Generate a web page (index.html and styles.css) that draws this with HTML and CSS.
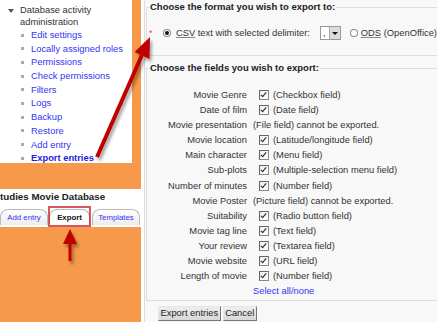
FILE: index.html
```html
<!DOCTYPE html>
<html lang="en">
<head>
  <meta charset="UTF-8">
  <title>Export entries</title>
  <link rel="stylesheet" href="styles.css">
</head>
<body>
  <div class="page">
    <aside class="side">
      <div class="admin-block">
        <div class="admin-head"><span class="tri"></span><span>Database activity<br>administration</span></div>
        <ul class="admin-list">
          <li><a href="#">Edit settings</a></li>
          <li><a href="#">Locally assigned roles</a></li>
          <li><a href="#">Permissions</a></li>
          <li><a href="#">Check permissions</a></li>
          <li><a href="#">Filters</a></li>
          <li><a href="#">Logs</a></li>
          <li><a href="#">Backup</a></li>
          <li><a href="#">Restore</a></li>
          <li><a href="#">Add entry</a></li>
          <li class="current"><a href="#">Export entries</a></li>
        </ul>
      </div>
      <div class="side-gap"></div>
      <div class="db-block">
        <div class="db-title">tudies Movie Database</div>
        <div class="tabs">
          <a href="#" class="tab tab-add">Add entry</a>
          <a href="#" class="tab tab-active">Export</a>
          <a href="#" class="tab tab-tpl">Templates</a>
        </div>
      </div>
    </aside>
    <div class="divider"></div>
    <main class="main">
      <form>
        <fieldset class="fs fs-format">
          <legend>Choose the format you wish to export to:</legend>
          <div class="format-row">
            <span class="req">*</span>
            <span class="radio checked"></span>
            <span class="opt"><u>CSV</u> text with selected delimiter:</span>
            <span class="sel"><span class="sel-val">,</span><span class="sel-btn"></span></span>
            <span class="radio radio-ods"></span>
            <span class="opt opt-ods"><u>ODS</u> (OpenOffice)</span>
          </div>
        </fieldset>
        <fieldset class="fs fs-fields">
          <legend>Choose the fields you wish to export:</legend>
          <div class="field-grid">
            <div class="flabel">Movie Genre</div><div class="fel"><span class="cb"></span>(Checkbox field)</div>
            <div class="flabel">Date of film</div><div class="fel"><span class="cb"></span>(Date field)</div>
            <div class="flabel">Movie presentation</div><div class="fel">(File field) cannot be exported.</div>
            <div class="flabel">Movie location</div><div class="fel"><span class="cb"></span>(Latitude/longitude field)</div>
            <div class="flabel">Main character</div><div class="fel"><span class="cb"></span>(Menu field)</div>
            <div class="flabel">Sub-plots</div><div class="fel"><span class="cb"></span>(Multiple-selection menu field)</div>
            <div class="flabel">Number of minutes</div><div class="fel"><span class="cb"></span>(Number field)</div>
            <div class="flabel">Movie Poster</div><div class="fel">(Picture field) cannot be exported.</div>
            <div class="flabel">Suitability</div><div class="fel"><span class="cb"></span>(Radio button field)</div>
            <div class="flabel">Movie tag line</div><div class="fel"><span class="cb"></span>(Text field)</div>
            <div class="flabel">Your review</div><div class="fel"><span class="cb"></span>(Textarea field)</div>
            <div class="flabel">Movie website</div><div class="fel"><span class="cb"></span>(URL field)</div>
            <div class="flabel">Length of movie</div><div class="fel"><span class="cb"></span>(Number field)</div>
            <div class="flabel"></div><div class="fel"><a href="#">Select all/none</a></div>
          </div>
        </fieldset>
        <div class="buttons">
          <button type="submit" class="btn">Export entries</button>
          <button type="button" class="btn">Cancel</button>
        </div>
      </form>
    </main>
  </div>

  <!-- annotation arrows drawn over the screenshot -->
  <svg class="arrows" width="437" height="322" viewBox="0 0 437 322">
    <defs>
      <filter id="shade" x="-50%" y="-50%" width="200%" height="200%">
        <feDropShadow dx="2" dy="3" stdDeviation="1.5" flood-color="#000" flood-opacity="0.35"/>
      </filter>
    </defs>
    <g fill="#bf0000" stroke="none" filter="url(#shade)">
      <line x1="97" y1="157" x2="142" y2="55" stroke="#bf0000" stroke-width="4"/>
      <polygon points="150,37 134.5,52 149.5,59"/>
      <polygon points="70,229 63,244 77,244"/>
      <rect x="68.5" y="243" width="3" height="18"/>
    </g>
  </svg>
</body>
</html>
```

FILE: styles.css
```css
body {
  margin: 0;
  font-family: "Liberation Sans", Arial, sans-serif;
  font-size: 9.35px;
  color: #333;
  background: #f8f8f8;
  overflow: hidden;
}
a {
  color: #3434f4;
  text-decoration: none;
}
.page {
  display: flex;
  width: 437px;
  height: 322px;
}
.side {
  width: 141px;
  flex: none;
  background: #f7994a;
  display: flex;
  flex-direction: column;
}
.admin-block {
  width: 132px;
  height: 163px;
  background: #fff;
  box-sizing: border-box;
  padding-top: 5px;
  overflow: hidden;
}
.admin-head {
  display: flex;
  align-items: flex-start;
  padding-left: 8px;
  line-height: 11.6px;
  color: #333;
}
.tri {
  width: 0;
  height: 0;
  border-left: 3px solid transparent;
  border-right: 3px solid transparent;
  border-top: 4px solid #555;
  margin: 4px 6px 0 0;
}
.admin-list {
  list-style: none;
  margin: 0;
  padding: 0 0 0 21px;
}
.admin-list li {
  display: flex;
  align-items: center;
  height: 13.7px;
}
.admin-list li::before {
  content: "";
  width: 3px;
  height: 3px;
  background: #aaa;
  margin-right: 7px;
}
.admin-list .current a {
  font-weight: bold;
  color: #1c1ce0;
}
.side-gap {
  height: 26px;
}
.db-block {
  background: #fff;
  height: 38px;
}
.db-title {
  font-weight: bold;
  font-size: 9.75px;
  line-height: 12px;
  padding-top: 2px;
  color: #222;
  white-space: nowrap;
}
.tabs {
  display: flex;
  margin-top: 6px;
}
.tab {
  position: relative;
  height: 16px;
  box-sizing: border-box;
  border: 1px solid #bbb;
  border-bottom: none;
  border-radius: 8px 8px 0 0;
  background: linear-gradient(#fff, #ececec);
  font-size: 7.8px;
  line-height: 15px;
  text-align: center;
}
.tab-add {
  width: 48px;
}
.tab-active {
  width: 41px;
  margin-left: 1px;
  background: #fff;
  color: #111;
  font-weight: bold;
}
.tab-active::after {
  content: "";
  position: absolute;
  left: -2px;
  right: -2px;
  top: -4px;
  bottom: -2px;
  border: 2px solid rgba(205, 45, 55, 0.8);
}
.tab-tpl {
  width: 48px;
  margin-left: 2px;
}
.divider {
  width: 3px;
  flex: none;
  background: #fff;
  border-right: 1px solid #ddd;
}
.main {
  flex: 1;
  min-width: 0;
  padding: 1px 0 0 1px;
  background: #f8f8f8;
}
.fs {
  border: 1px solid #ddd;
  border-right: none;
  margin: 0;
  padding: 0 0 0 2px;
  min-width: 0;
}
.fs legend {
  padding: 0 1px;
  font-weight: bold;
  font-size: 9.5px;
  line-height: 12px;
  color: #222;
}
.format-row {
  display: flex;
  align-items: center;
  height: 15px;
  margin: 12.5px 0 14.5px;
  white-space: nowrap;
}
.req {
  color: #e43;
  font-size: 9px;
  line-height: 9px;
  width: 5px;
}
.radio {
  width: 8px;
  height: 8px;
  box-sizing: border-box;
  border: 1px solid #888;
  border-radius: 50%;
  background: #fff;
  margin-left: 9px;
  display: flex;
  align-items: center;
  justify-content: center;
}
.radio.checked::after {
  content: "";
  width: 4px;
  height: 4px;
  border-radius: 50%;
  background: #111;
}
.opt {
  margin-left: 5px;
}
.opt u {
  text-decoration-color: #888;
}
.sel {
  display: flex;
  width: 21px;
  height: 14px;
  box-sizing: border-box;
  border: 1px solid #999;
  background: #fff;
  margin-left: 10px;
}
.sel-val {
  flex: 1;
  padding-left: 2px;
  line-height: 12px;
}
.sel-btn {
  width: 10px;
  background: #ddd;
  border-left: 1px solid #aaa;
  display: flex;
  align-items: center;
  justify-content: center;
}
.sel-btn::after {
  content: "";
  border-left: 3px solid transparent;
  border-right: 3px solid transparent;
  border-top: 3px solid #111;
}
.radio-ods {
  margin-left: 9px;
}
.opt-ods {
  margin-left: 3px;
}
.fs-fields {
  margin-top: 6px;
  padding-bottom: 1px;
}
.field-grid {
  display: grid;
  grid-template-columns: 98px 1fr;
  grid-auto-rows: 15.08px;
  column-gap: 6px;
  align-items: center;
  margin-top: 13.5px;
  white-space: nowrap;
}
.flabel {
  text-align: right;
}
.fel {
  display: flex;
  align-items: center;
}
.cb {
  position: relative;
  width: 10px;
  height: 10px;
  box-sizing: border-box;
  border: 1px solid #888;
  border-top-color: #666;
  border-left-color: #666;
  background: linear-gradient(135deg, #eee, #fff);
  margin: 0 4px 0 6px;
}
.cb::after {
  content: "";
  position: absolute;
  left: 2px;
  top: 0;
  width: 2px;
  height: 5px;
  border: solid #222;
  border-width: 0 1.5px 1.5px 0;
  transform: rotate(40deg);
}
.buttons {
  display: flex;
  gap: 2px;
  margin: 5px 0 0 12px;
}
.btn {
  height: 15px;
  padding: 0 1.5px;
  font-family: inherit;
  font-size: 9.35px;
  color: #222;
  background: linear-gradient(#eee, #d8d8d8);
  border: 1px solid;
  border-color: #e6e6e6 #777 #777 #e6e6e6;
}
.arrows {
  position: absolute;
  left: 0;
  top: 0;
  pointer-events: none;
}
```
